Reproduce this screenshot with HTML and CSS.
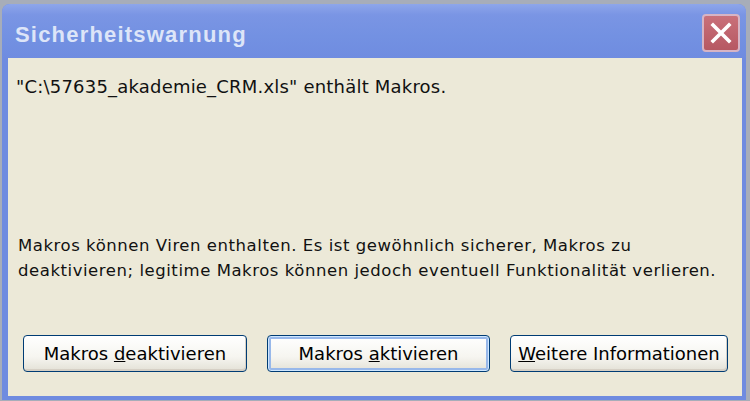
FILE: index.html
```html
<!DOCTYPE html>
<html>
<head>
    <title>Sicherheitswarnung</title>
    <link rel="stylesheet" href="styles.css">
</head>
<body>
    <div class="window">
        <div class="titlebar">
            <span class="title">Sicherheitswarnung</span>
            <button class="close" type="button" aria-label="Schließen">
                <svg width="22" height="22" viewBox="0 0 22 22">
                    <path d="M3 3 L19 19 M19 3 L3 19" stroke="#fff" stroke-width="3.6" stroke-linecap="square"/>
                </svg>
            </button>
        </div>
        <div class="client">
            <p class="file">"C:\57635_akademie_CRM.xls" enthält Makros.</p>
            <p class="message">Makros können Viren enthalten. Es ist gewöhnlich sicherer, Makros zu<br>deaktivieren; legitime Makros können jedoch eventuell Funktionalität verlieren.</p>
            <div class="buttons">
                <button type="button" class="btn btn-off">Makros <u>d</u>eaktivieren</button>
                <button type="button" class="btn btn-on default">Makros <u>a</u>ktivieren</button>
                <button type="button" class="btn btn-info"><u>W</u>eitere Informationen</button>
            </div>
        </div>
    </div>
</body>
</html>
```

FILE: styles.css
```css
body {
    margin: 0;
    background-color: #a7adb9;
    font-family: "DejaVu Sans", sans-serif;
}
.window {
    margin: 4px 4px 1px 2px;
    height: 396px;
    display: flex;
    flex-direction: column;
    background-color: #6f8be0;
    border-radius: 8px 8px 0 0;
}
.titlebar {
    height: 54px;
    display: flex;
    align-items: center;
    justify-content: space-between;
    padding: 0 6px 0 13px;
    border-radius: 8px 8px 0 0;
    background: linear-gradient(#8ea6ea 0%, #7a95e4 20%, #7391e2 60%, #6f8ce0 100%);
}
.title {
    font-family: "Liberation Sans", sans-serif;
    font-weight: bold;
    font-size: 22px;
    letter-spacing: 1.2px;
    color: #dde5f8;
    margin-top: 8px;
}
.close {
    width: 38px;
    height: 38px;
    margin-top: 4px;
    padding: 0;
    display: flex;
    align-items: center;
    justify-content: center;
    border: 2px solid #d7b4c4;
    border-radius: 4px;
    background: linear-gradient(#c9707a, #b65862);
}
.client {
    flex: 1;
    margin: 0 4px 4px 6px;
    background-color: #ece9d8;
    display: flex;
    flex-direction: column;
}
.file {
    margin: 18px 0 0 8px;
    font-size: 18px;
    letter-spacing: 0.2px;
    color: #111;
}
.message {
    margin: 136px 0 0 10px;
    font-size: 16.5px;
    letter-spacing: 0.55px;
    line-height: 25px;
    color: #111;
}
.buttons {
    display: flex;
    gap: 20px;
    margin: 52px 0 0 15px;
}
.btn {
    height: 37px;
    font-family: "DejaVu Sans", sans-serif;
    font-size: 18px;
    color: #000;
    border: 1px solid #003c74;
    border-radius: 4px;
    background: linear-gradient(#ffffff 0%, #f6f5f0 60%, #e3e1d6 100%);
    box-shadow: inset -1px -2px 0 #d6d0c5;
    padding: 0;
}
.btn-off { width: 224px; }
.btn-on { width: 223px; }
.btn-info { width: 218px; }
.default {
    box-shadow: inset 0 0 0 1px #cee7ff, inset 0 0 0 3px #98b8ea;
}
```
